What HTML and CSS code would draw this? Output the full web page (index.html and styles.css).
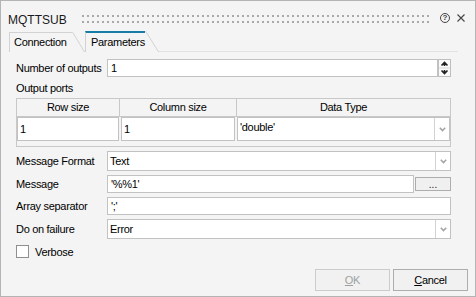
FILE: index.html
```html
<!DOCTYPE html>
<html>
<head>
    <title>MQTTSUB</title>
    <link rel="stylesheet" href="styles.css">
</head>
<body>
    <div class="dialog">
        <div class="titlebar">
            <span class="title">MQTTSUB</span>
            <div class="grip"></div>
            <span class="help">?</span>
            <svg class="close" width="8" height="8" viewBox="0 0 8 8">
                <path d="M0.5 0.5 L7.5 7.5 M7.5 0.5 L0.5 7.5" stroke="#444" stroke-width="1.1" fill="none"/>
            </svg>
        </div>

        <div class="tabs">
            <div class="tab">Connection</div>
            <div class="tab active">Parameters</div>
            <div class="tab-fill"></div>
        </div>

        <div class="page">
            <div class="row outputs-row">
                <label>Number of outputs</label>
                <div class="field">1</div>
                <svg class="spin" width="13" height="18" viewBox="0 0 13 18">
                    <rect x="0.5" y="0.5" width="12" height="17" fill="#fbfbfb" stroke="#bfbfbf"/>
                    <path d="M1 9 H12" stroke="#d6d6d6"/>
                    <path d="M3.5 6.5 L6.5 3.5 L9.5 6.5 M6.5 4 V7" stroke="#222" stroke-width="1.6" fill="none"/>
                    <path d="M3.5 11.5 L6.5 14.5 L9.5 11.5 M6.5 11 V14" stroke="#222" stroke-width="1.6" fill="none"/>
                </svg>
            </div>

            <div class="section-label">Output ports</div>
            <div class="ports">
                <div class="ports-head">Row size</div>
                <div class="ports-head">Column size</div>
                <div class="ports-head last">Data Type</div>
                <div class="ports-cell first"><div class="cell-input">1</div></div>
                <div class="ports-cell second"><div class="cell-input">1</div></div>
                <div class="ports-cell">
                    <div class="cell-input combo-cell">
                        <span class="combo-text">'double'</span>
                        <span class="combo-arrow">
                            <svg width="7" height="5" viewBox="0 0 7 5"><path d="M0.8 0.8 L3.5 3.6 L6.2 0.8" stroke="#a2a2a2" stroke-width="1.5" fill="none"/></svg>
                        </span>
                    </div>
                </div>
            </div>

            <div class="row combo-row">
                <label>Message Format</label>
                <div class="combo">
                    <span class="combo-text">Text</span>
                    <span class="combo-arrow">
                        <svg width="7" height="5" viewBox="0 0 7 5"><path d="M0.8 0.8 L3.5 3.6 L6.2 0.8" stroke="#a2a2a2" stroke-width="1.5" fill="none"/></svg>
                    </span>
                </div>
            </div>

            <div class="row">
                <label>Message</label>
                <div class="field">'%%1'</div>
                <button class="dots">...</button>
            </div>

            <div class="row">
                <label>Array separator</label>
                <div class="field">';'</div>
            </div>

            <div class="row combo-row">
                <label>Do on failure</label>
                <div class="combo">
                    <span class="combo-text">Error</span>
                    <span class="combo-arrow">
                        <svg width="7" height="5" viewBox="0 0 7 5"><path d="M0.8 0.8 L3.5 3.6 L6.2 0.8" stroke="#a2a2a2" stroke-width="1.5" fill="none"/></svg>
                    </span>
                </div>
            </div>

            <div class="check-row">
                <span class="checkbox"></span>
                <span>Verbose</span>
            </div>
        </div>

        <div class="footer">
            <button class="btn" disabled><u>O</u>K</button>
            <button class="btn"><u>C</u>ancel</button>
        </div>
    </div>
</body>
</html>
```

FILE: styles.css
```css
body {
    margin: 0;
    font-family: "Liberation Sans", Arial, sans-serif;
    font-size: 11px;
    letter-spacing: -0.3px;
    color: #000;
    background: #f4f4f4;
}
.dialog {
    width: 476px;
    height: 297px;
    box-sizing: border-box;
    border: 1px solid #b4b4b4;
    background: #f4f4f4;
    display: flex;
    flex-direction: column;
}
.titlebar {
    display: flex;
    align-items: flex-start;
    height: 30px;
    padding: 0 10px 0 7px;
}
.title {
    margin-top: 12px;
    font-size: 12px;
    line-height: 14px;
    letter-spacing: 0;
    color: #1a1a1a;
}
.grip {
    flex: 1;
    height: 8px;
    margin: 14px 9px 0 15px;
    background-image:
        linear-gradient(to right, #a9a9a9 2px, transparent 2px),
        linear-gradient(to right, #a9a9a9 2px, transparent 2px);
    background-size: 5px 2px, 5px 2px;
    background-position: 0 0, 0 6px;
    background-repeat: repeat-x;
}
.help {
    width: 10px;
    height: 10px;
    box-sizing: border-box;
    margin: 12px 7px 0 0;
    border: 1px solid #444;
    border-radius: 50%;
    font-size: 8px;
    font-weight: bold;
    line-height: 8px;
    text-align: center;
    letter-spacing: 0;
    color: #444;
}
.close {
    margin-top: 13px;
}
.tabs {
    display: flex;
    align-items: flex-end;
    height: 21px;
    padding-left: 8px;
}
.tab {
    position: relative;
    box-sizing: border-box;
    height: 20px;
    width: 63px;
    border-top: 1px solid #d2d2d2;
    border-left: 1px solid #d2d2d2;
    padding-left: 4px;
    line-height: 19px;
}
.tab::after {
    content: "";
    position: absolute;
    left: 100%;
    top: -1px;
    height: 20px;
    border-left: 1px solid #d2d2d2;
    transform: skewX(31deg);
    transform-origin: top left;
}
.tab.active {
    height: 21px;
    width: 60px;
    margin-left: 13px;
    border-top: 2px solid #177ca6;
    padding-left: 5px;
}
.tab.active::after {
    top: -2px;
    height: 21px;
    transform: skewX(32deg);
}
.tab-fill {
    flex: 1;
    margin: 0 17px 0 13px;
    border-bottom: 1px solid #e2e2e2;
}
.page {
    flex: 1;
    padding: 0 24px 0 15px;
}
.row {
    display: flex;
    align-items: center;
    margin-top: 4px;
}
.row label {
    width: 91px;
    flex: none;
}
.outputs-row {
    margin-top: 7px;
}
.field {
    flex: 1;
    height: 18px;
    box-sizing: border-box;
    border: 1px solid #c2c2c2;
    background: #fff;
    padding-left: 3px;
    line-height: 16px;
}
.spin {
    flex: none;
}
.section-label {
    margin-top: 4px;
    line-height: 14px;
}
.ports {
    margin-top: 3px;
    height: 49px;
    box-sizing: border-box;
    border: 1px solid #c8c8c8;
    display: grid;
    grid-template-columns: 103px 117px 1fr;
    grid-template-rows: 18px 24px;
    align-content: start;
}
.ports-head {
    border-right: 1px solid #c8c8c8;
    border-bottom: 1px solid #c8c8c8;
    text-align: center;
    line-height: 17px;
}
.ports-head.last {
    border-right: none;
}
.ports-cell {
    display: flex;
}
.ports-cell.first {
    padding-right: 1px;
}
.ports-cell.second {
    padding: 0 2px 0 1px;
}
.cell-input {
    flex: 1;
    box-sizing: border-box;
    height: 24px;
    border: 1px solid #c2c2c2;
    background: #fff;
    padding-left: 2px;
    line-height: 22px;
}
.combo-cell {
    display: flex;
    padding-left: 0;
}
.combo-cell .combo-text {
    padding-left: 2px;
}
.combo {
    flex: 1;
    display: flex;
    height: 20px;
    box-sizing: border-box;
    border: 1px solid #c2c2c2;
    background: #fff;
}
.combo-text {
    flex: 1;
    padding-left: 2px;
    line-height: 18px;
}
.combo-arrow {
    width: 14px;
    border-left: 1px solid #d2d2d2;
    display: flex;
    align-items: center;
    justify-content: center;
}
.dots {
    width: 36px;
    height: 14px;
    margin-left: 1px;
    box-sizing: border-box;
    border: 1px solid #adadad;
    background: #f0f0f0;
    padding: 0;
    font-family: inherit;
    font-size: 10px;
    line-height: 14px;
    color: #222;
}
.check-row {
    display: flex;
    align-items: center;
    margin-top: 6px;
    height: 13px;
}
.checkbox {
    width: 13px;
    height: 13px;
    box-sizing: border-box;
    border: 1px solid #8f8f8f;
    background: #fff;
    margin-right: 6px;
}
.footer {
    display: flex;
    justify-content: flex-end;
    gap: 3px;
    padding: 0 7px 5px 0;
}
.btn {
    width: 75px;
    height: 22px;
    box-sizing: border-box;
    border: 1px solid #adadad;
    background: #f1f1f1;
    font-family: inherit;
    font-size: 11px;
    letter-spacing: -0.3px;
    color: #000;
    padding: 0;
}
.btn:disabled {
    border-color: #cccccc;
    color: #a0a0a0;
}
```
